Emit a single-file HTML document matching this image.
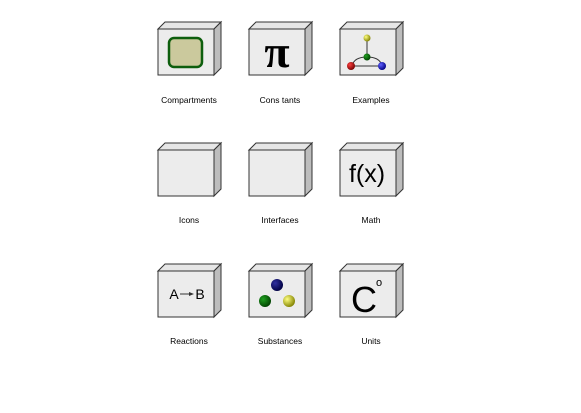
<!DOCTYPE html>
<html><head><style>body{margin:0;background:#fff}svg{display:block}</style></head><body>
<svg width="581" height="413" viewBox="0 0 581 413" xmlns="http://www.w3.org/2000/svg" font-family="Liberation Sans, sans-serif">
<defs>
<g id="box">
<polygon points="0,7 7,0 63,0 56,7" fill="#e6e6e6" stroke="#333" stroke-width="1"/>
<polygon points="56,7 63,0 63,46 56,53" fill="#bdbdbd" stroke="#333" stroke-width="1"/>
<rect x="0" y="7" width="56" height="46" fill="#ececec" stroke="#333" stroke-width="1"/>
</g>
<radialGradient id="gy" cx="0.35" cy="0.35" r="0.7"><stop offset="0" stop-color="#ffff80"/><stop offset="1" stop-color="#808000"/></radialGradient>
<radialGradient id="gg" cx="0.35" cy="0.35" r="0.7"><stop offset="0" stop-color="#20a020"/><stop offset="1" stop-color="#004000"/></radialGradient>
<radialGradient id="gr" cx="0.35" cy="0.35" r="0.7"><stop offset="0" stop-color="#ff4040"/><stop offset="1" stop-color="#700000"/></radialGradient>
<radialGradient id="gb" cx="0.35" cy="0.35" r="0.7"><stop offset="0" stop-color="#6060ff"/><stop offset="1" stop-color="#000080"/></radialGradient>
<radialGradient id="gn" cx="0.35" cy="0.35" r="0.7"><stop offset="0" stop-color="#3030a0"/><stop offset="1" stop-color="#000040"/></radialGradient>
</defs>
<g font-size="8.5" text-anchor="middle" fill="#000">
<g transform="translate(158,22)"><use href="#box"/>
<rect x="11" y="16" width="33" height="29" rx="5" fill="#cbc99d" stroke="#0d5e0d" stroke-width="2.5"/></g>
<text x="189" y="103">Compartments</text>
<g transform="translate(249,22)"><use href="#box"/>
<text x="28" y="45" font-size="46" font-family="Liberation Serif, serif" font-weight="bold">π</text></g>
<text x="280" y="103">Cons tants</text>
<g transform="translate(340,22)"><use href="#box"/>
<line x1="27" y1="18" x2="27" y2="33" stroke="#333"/>
<path d="M12,44 Q14,35 27,35 Q40,35 42,44" fill="none" stroke="#333"/>
<line x1="14" y1="44" x2="40" y2="44" stroke="#333"/>
<circle cx="27" cy="16" r="3.5" fill="url(#gy)"/>
<circle cx="27" cy="35" r="3.5" fill="url(#gg)"/>
<circle cx="11" cy="44" r="4" fill="url(#gr)"/>
<circle cx="42" cy="44" r="4" fill="url(#gb)"/></g>
<text x="371" y="103">Examples</text>
<g transform="translate(158,143)"><use href="#box"/></g>
<text x="189" y="223">Icons</text>
<g transform="translate(249,143)"><use href="#box"/></g>
<text x="280" y="223">Interfaces</text>
<g transform="translate(340,143)"><use href="#box"/>
<text x="27" y="39" font-size="25">f(x)</text></g>
<text x="371" y="223">Math</text>
<g transform="translate(158,264)"><use href="#box"/>
<text x="16" y="35" font-size="14">A</text>
<line x1="22" y1="30" x2="32" y2="30" stroke="#333"/><polygon points="31,28 36,30 31,32" fill="#333"/>
<text x="42" y="35" font-size="14">B</text></g>
<text x="189" y="344">Reactions</text>
<g transform="translate(249,264)"><use href="#box"/>
<circle cx="28" cy="21" r="6" fill="url(#gn)"/>
<circle cx="16" cy="37" r="6" fill="url(#gg)"/>
<circle cx="40" cy="37" r="6" fill="url(#gy)"/></g>
<text x="280" y="344">Substances</text>
<g transform="translate(340,264)"><use href="#box"/>
<text x="24" y="48" font-size="36">C</text>
<text x="39" y="22" font-size="11">o</text></g>
<text x="371" y="344">Units</text>
</g>
</svg>
</body></html>
